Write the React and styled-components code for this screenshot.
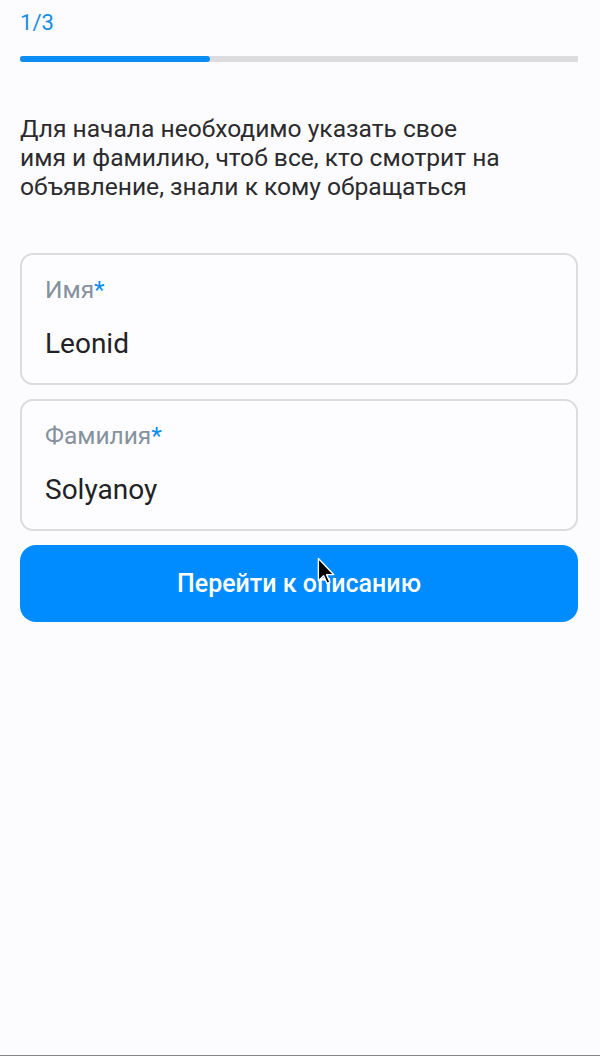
import React from 'react'
import styled, { createGlobalStyle } from 'styled-components';

const GlobalStyle = createGlobalStyle`
  html, body {
    margin: 0;
    padding: 0;
    background: #fcfbfe;
    font-family: Roboto, "Noto Sans", "Liberation Sans", sans-serif;
  }
  * { box-sizing: border-box; }
`;

const Screen = styled.div`
  position: relative;
  height: 1056px;
  padding: 0 22px 0 20px;
  border-bottom: 1px solid #858585;
  display: flex;
  flex-direction: column;
`;

const Step = styled.div`
  margin-top: 9px;
  font-size: 22px;
  line-height: 28px;
  color: #168de6;
`;

const Track = styled.div`
  margin-top: 19px;
  height: 6px;
  background: #dcdcdf;
`;

const Fill = styled.div`
  height: 100%;
  background: #0a8cf5;
  border-radius: 3px;
`;

const Intro = styled.p`
  margin: 52px 0 0;
  font-size: 24.6px;
  line-height: 29px;
  color: #2b2b2d;
`;

const Form = styled.div`
  margin-top: 52px;
  display: flex;
  flex-direction: column;
  gap: 14px;
`;

const Field = styled.div`
  height: 132px;
  border: 2px solid #dcdcdf;
  border-radius: 13px;
  background: #fdfdff;
  padding: 21px 23px 0;
  display: flex;
  flex-direction: column;
`;

const Label = styled.div`
  font-size: 24.5px;
  line-height: 28px;
  color: #85929d;
`;

const Star = styled.span`
  color: #0a8cf5;
`;

const Value = styled.div`
  margin-top: 24px;
  font-size: 28px;
  line-height: 32px;
  color: #222224;
`;

const Submit = styled.button`
  height: 77px;
  border: none;
  border-radius: 16px;
  background: #008cff;
  color: #ffffff;
  font-family: Roboto, "Noto Sans", sans-serif;
  font-size: 25px;
  font-weight: 500;
  cursor: pointer;
`;

const Pointer = styled.svg`
  position: absolute;
  left: 317px;
  top: 557px;
`;

const fields = [
  { label: 'Имя', value: 'Leonid' },
  { label: 'Фамилия', value: 'Solyanoy' },
];

export default function App() {
  const step = 1, total = 3;

  return (
    <>
      <GlobalStyle />
      <Screen>
        <Step>{step}/{total}</Step>
        <Track>
          <Fill style={{ width: `${(step / total) * 100 + 0.7}%` }} />
        </Track>
        <Intro>
          Для начала необходимо указать свое<br />
          имя и фамилию, чтоб все, кто смотрит на<br />
          объявление, знали к кому обращаться
        </Intro>
        <Form>
          {fields.map(f => (
            <Field key={f.label}>
              <Label>{f.label}<Star>*</Star></Label>
              <Value>{f.value}</Value>
            </Field>
          ))}
          <Submit>Перейти к описанию</Submit>
        </Form>
        <Pointer width="18" height="28" viewBox="0 0 13 20">
          <path d="M1 1 L1 17 L4.8 13.4 L7.3 19 L9.4 18.1 L6.9 12.6 L12 12.6 Z" fill="#000" stroke="#fff" strokeWidth="1" strokeLinejoin="round" />
        </Pointer>
      </Screen>
    </>
  )
}
